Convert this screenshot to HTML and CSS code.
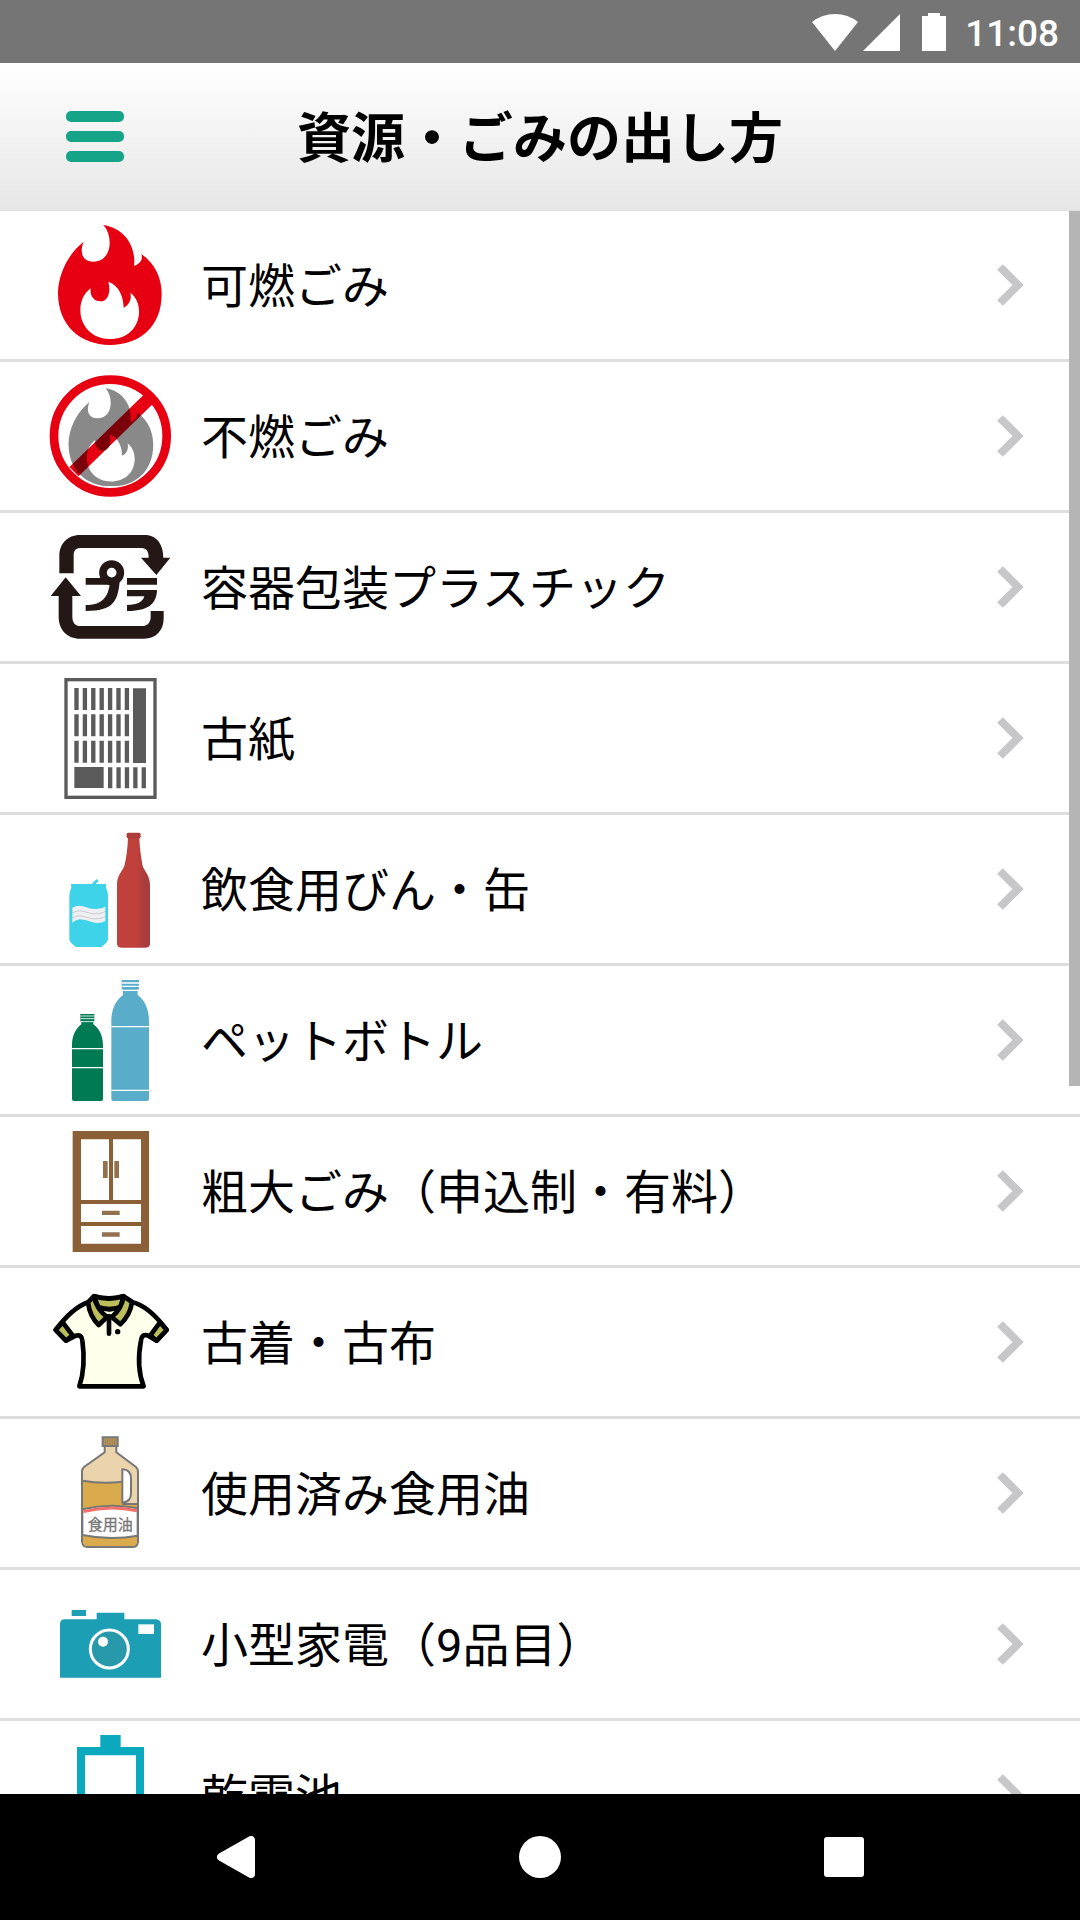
FILE: index.html
```html
<!DOCTYPE html>
<html lang="ja">
<head>
<meta charset="utf-8">
<meta name="viewport" content="width=device-width, initial-scale=1">
<title>資源・ごみの出し方</title>
<link rel="stylesheet" href="styles.css">
</head>
<body>
<svg class="defs" width="0" height="0" aria-hidden="true">
  <symbol id="flame" viewBox="0 0 360 360">
    <path fill-rule="evenodd" d="M160 0C222 9 259 62 252 123C269 118 280 104 274 87C315 115 335 160 335 205C336 305 270 360 180 360C90 360 24 300 24 205C24 148 55 86 101 50C88 80 96 110 130 110C164 110 179 82 179 53C179 32 172 13 160 0ZM175 170C183 200 175 229 151 229C130 229 119 210 122 190C102 205 91 228 91 255C91 305 128 342 180 342C230 342 265 310 267 263C268 240 260 217 241 203C245 220 240 240 221 248C220 215 208 182 175 170Z"/>
  </symbol>
  <symbol id="chevron" viewBox="0 0 30 50">
    <path d="M4 7L22 25L4 43" fill="none" stroke="#c7c7ca" stroke-width="8"/>
  </symbol>
</svg>
<div class="app">
  <div class="status">
    <svg class="status-signal" viewBox="0 0 134 38" aria-hidden="true">
      <path d="M0 9Q10 1 23 1T46 9L23 38ZM51 38L88 1V38ZM110 3H116V0H128V3H134V38H110Z"/>
    </svg>
    <time class="clock">11:08</time>
  </div>
  <header class="header">
    <button class="menu" type="button" aria-label="メニュー"><span></span><span></span><span></span></button>
    <h1 class="title">資源・ごみの出し方</h1>
  </header>
  <main class="content">
    <ul class="list">
      <li><a class="row" href="#burnable">
        <svg class="icon red" viewBox="0 0 360 360" aria-hidden="true"><use href="#flame"/></svg>
        <span class="label">可燃ごみ</span><svg class="chevron" aria-hidden="true"><use href="#chevron"/></svg></a></li>
      <li><a class="row" href="#nonburnable">
        <svg class="icon" viewBox="60 498 360 360" aria-hidden="true">
          <use href="#flame" x="96" y="535" width="294" height="294" fill="#898989"/>
          <circle cx="241" cy="678" r="169" fill="none" stroke="#e60012" stroke-width="26"/>
          <path class="slash" d="M354 569L132 785" stroke="#e60012" stroke-width="39"/>
        </svg>
        <span class="label">不燃ごみ</span><svg class="chevron" aria-hidden="true"><use href="#chevron"/></svg></a></li>
      <li><a class="row" href="#plastic">
        <svg class="icon" viewBox="60 51 360 360" fill="#231815" aria-hidden="true">
          <path d="M88 190V138C88 102 112 75 150 75H345C380 75 400 103 400 143H421L379 195L333 143H356C356 125 350 114 334 114H152C138 114 131 122 131 135V190Z"/>
          <path d="M107 202L153 258H127V320C127 338 136 348 152 348H335C352 348 362 338 362 320V303H401V325C401 362 378 386 342 386H150C112 386 86 360 86 320V258H62Z"/>
          <circle cx="245" cy="188" r="26" fill="none" stroke="#231815" stroke-width="23"/>
          <path d="M167 204H222L240 220V224H167ZM270 205C264 275 252 303 167 303V285C215 284 235 265 240 215ZM291 204H381V224H291ZM291 240H381C380 285 350 303 291 303V285C325 284 338 275 343 259H291Z"/>
        </svg>
        <span class="label">容器包装プラスチック</span><svg class="chevron" aria-hidden="true"><use href="#chevron"/></svg></a></li>
      <li><a class="row" href="#paper">
        <svg class="icon" viewBox="60 504 360 360" fill="#5a5a5a" stroke="#5a5a5a" aria-hidden="true">
          <rect x="108" y="509" width="267" height="353" fill="none" stroke-width="10"/>
          <path d="M133 567H298M133 646H298M133 725H298" stroke-width="66" stroke-dasharray="13 12.2"/>
          <path d="M234 803H348" stroke-width="63" stroke-dasharray="13 12.2"/>
          <path d="M309 535H348V759H309ZM133 771H221V834H133Z" stroke="none"/>
        </svg>
        <span class="label">古紙</span><svg class="chevron" aria-hidden="true"><use href="#chevron"/></svg></a></li>
      <li><a class="row" href="#bottles-cans">
        <svg class="icon" viewBox="60 57 360 360" aria-hidden="true">
          <linearGradient id="glass"><stop offset=".6" stop-color="#c0403c"/><stop offset=".85" stop-color="#a93c3d"/></linearGradient>
          <path fill="#3fd3ea" d="M123 222H185L200 207L206 212L197 222H228V233Q234 243 234 256V388Q234 397 214 411H138Q118 397 118 388V256Q118 243 124 234Z"/>
          <path fill="#eeeff2" d="M127 293Q145 282 166 291T205 296Q218 295 226 290V333Q207 343 186 336T148 328Q136 330 127 338Z"/>
          <path fill="none" stroke="#b5b9bf" stroke-width="2" d="M127 309Q145 298 166 306T205 311Q218 309 226 304M127 324Q145 313 166 321T205 326Q218 324 226 319"/>
          <path fill="url(#glass)" d="M294 82H328C329 120 335 150 338 168C345 187 360 197 360 225V401Q360 413 345 413H277Q261 413 261 401V225C261 197 275 187 283 168C289 145 293 115 294 82Z"/>
          <rect x="290" y="68" width="42" height="17" rx="5" fill="#ad3c3a"/>
        </svg>
        <span class="label">飲食用びん・缶</span><svg class="chevron" aria-hidden="true"><use href="#chevron"/></svg></a></li>
      <li><a class="row" href="#pet">
        <svg class="icon" viewBox="60 510 360 360" aria-hidden="true">
          <path fill="#007a53" d="M151 612H193V634H190V643C208 655 219 678 219 706V868Q219 873 213 873H132Q126 873 126 868V706C126 678 137 655 154 643V634H151Z"/>
          <path fill="#59adca" d="M275 510H327V538H323V555C345 570 357 600 357 632V868Q357 873 351 873H250Q244 873 244 868V632C244 600 257 570 279 555V538H275Z"/>
          <path stroke="#fff" stroke-width="4" d="M126 716H219M126 773H219M244 650H357M244 841H357M275 519H327M275 529H327M275 541H327"/>
          <path stroke="#d5eee5" stroke-width="3" d="M151 618H193M151 626H193M151 635H193"/>
        </svg>
        <span class="label">ペットボトル</span><svg class="chevron" aria-hidden="true"><use href="#chevron"/></svg></a></li>
      <li><a class="row" href="#bulky">
        <svg class="icon" viewBox="60 63 360 360" aria-hidden="true">
          <path fill="#8c6036" fill-rule="evenodd" d="M128 63H357V426H128ZM153 88V270H237V88ZM249 88V270H333V88ZM153 282V336H333V282ZM153 348V401H333V348Z"/>
          <path fill="#93704e" d="M219 153H233V204H219ZM253 153H267V204H253ZM216 302H269V315H216ZM216 367H269V380H216Z"/>
        </svg>
        <span class="label">粗大ごみ（申込制・有料）</span><svg class="chevron" aria-hidden="true"><use href="#chevron"/></svg></a></li>
      <li><a class="row" href="#clothes">
        <svg class="icon" viewBox="60 516 360 360" aria-hidden="true" stroke="#000" stroke-width="14" stroke-linejoin="round" stroke-linecap="round">
          <path fill="#ffffeb" d="M175 577C135 590 105 623 77 660L108 692L137 677Q155 672 157 691Q168 770 148 829H341Q318 770 333 691Q335 672 352 676L380 692L410 660C382 622 348 586 306 576L281 559Q237 571 192 559Z"/>
          <path fill="#bcbe5c" d="M77 660L98 637L128 676L108 692ZM410 660L390 637L361 676L380 692ZM192 559Q237 573 281 559L271 592Q237 602 205 592Z"/>
          <path fill="#bcbe5c" d="M174 577L192 559Q199 597 231 621L206 645Q179 620 174 577ZM306 576L281 559Q275 597 245 621L271 643Q301 615 306 576Z"/>
          <path fill="none" d="M209 593Q238 603 267 593M237 618V671"/>
          <circle cx="263" cy="665" r="8" fill="#000" stroke="none"/>
        </svg>
        <span class="label">古着・古布</span><svg class="chevron" aria-hidden="true"><use href="#chevron"/></svg></a></li>
      <li><a class="row" href="#oil">
        <svg class="icon" viewBox="60 69 360 360" aria-hidden="true" stroke="#777" stroke-width="6">
          <path fill="#ebd3ab" d="M224 108V127L162 171Q156 176 156 186V395Q158 411 172 411H308Q323 411 324 395V186Q324 176 318 171L259 127V108Z"/>
          <path fill="#daab4c" stroke="none" d="M159 214Q215 221 277 215V282H321V395Q320 408 308 408H172Q160 408 159 395Z"/>
          <path fill="none" d="M158 212Q215 222 277 215M277 282H324"/>
          <path fill="#fff" d="M277 178Q303 179 303 205V250Q303 276 277 278Z"/>
          <path fill="#fff" d="M157 298Q240 278 323 295V377Q240 392 157 375Z"/>
          <path fill="none" stroke="#f2716d" stroke-width="9" d="M160 305Q240 285 321 302"/>
          <path fill="#b8945b" d="M218 82H263V108H218Z"/>
          <path fill="none" stroke="#94764a" stroke-width="2" d="M226 87V104M233 87V104M240 87V104M247 87V104M254 87V104"/>
          <text class="oil-text" x="173" y="361" font-size="45">食用油</text>
        </svg>
        <span class="label">使用済み食用油</span><svg class="chevron" aria-hidden="true"><use href="#chevron"/></svg></a></li>
      <li><a class="row" href="#appliances">
        <svg class="icon" viewBox="60 522 360 360" aria-hidden="true">
          <path fill="#1c9fb4" d="M90 803V643Q90 628 104 628H200V608H283V628H378Q393 630 393 643V803ZM125 600H168V618H125Z"/>
          <path fill="#fff" d="M325 643H372V672H325Z"/>
          <circle cx="238" cy="717" r="57" fill="#2799aa" stroke="#fff" stroke-width="9"/>
          <circle cx="219" cy="695" r="15" fill="#fff"/>
        </svg>
        <span class="label">小型家電（9品目）</span><svg class="chevron" aria-hidden="true"><use href="#chevron"/></svg></a></li>
      <li><a class="row" href="#batteries">
        <svg class="icon" viewBox="60 105 360 360" aria-hidden="true">
          <path fill="#0aa9bd" fill-rule="evenodd" d="M211 105H272V141H342V465H141V141H211ZM165 166V441H318V166Z"/>
        </svg>
        <span class="label">乾電池</span><svg class="chevron" aria-hidden="true"><use href="#chevron"/></svg></a></li>
    </ul>
    <div class="thumb"></div>
  </main>
  <nav class="nav">
    <button type="button" aria-label="戻る"><svg viewBox="0 0 42 42"><path d="M6 21L36 4V38Z" stroke="#fff" stroke-width="8" stroke-linejoin="round"/></svg></button>
    <button type="button" aria-label="ホーム"><svg viewBox="0 0 42 42"><circle cx="21" cy="21" r="21"/></svg></button>
    <button type="button" aria-label="履歴"><svg viewBox="0 0 42 42"><rect x="1" y="1" width="40" height="40" rx="3"/></svg></button>
  </nav>
</div>
</body>
</html>
```
FILE: styles.css
```css
* {
  box-sizing: border-box;
}

body {
  margin: 0;
  background: #fff;
  color: #000;
  font-family: Roboto, "Noto Sans CJK JP", sans-serif;
}

.defs {
  position: absolute;
}

.app {
  display: flex;
  flex-direction: column;
  height: 100vh;
}

.status {
  display: flex;
  flex: none;
  justify-content: flex-end;
  align-items: center;
  gap: 19px;
  height: 63px;
  padding-right: 21px;
  background: #757575;
  color: #fff;
}

.status-signal {
  width: 134px;
  height: 38px;
  fill: #fff;
}

.clock {
  padding-top: 4px;
  font: 500 37px/44px Roboto, sans-serif;
}

.header {
  display: grid;
  flex: none;
  grid-template-columns: 60px 1fr 60px;
  align-items: center;
  height: 148px;
  padding: 0 65px;
  border-bottom: 1px solid #ddd;
  background: linear-gradient(#fff, #e6e6e6);
}

.menu {
  display: flex;
  flex-direction: column;
  gap: 9px;
  padding: 0 1px;
  border: 0;
  background: none;
}

.menu span {
  height: 11px;
  border-radius: 5px;
  background: #15a488;
}

.title {
  margin: 0;
  padding-top: 6px;
  font-size: 54px;
  font-weight: 700;
  line-height: 80px;
  text-align: center;
}

.content {
  position: relative;
  flex: 1;
  min-height: 0;
  overflow: hidden;
}

.list {
  margin: 0;
  padding: 0;
  list-style: none;
}

.row {
  display: flex;
  align-items: center;
  gap: 31px;
  height: 151px;
  padding: 0 54px 0 50px;
  border-bottom: 3px solid #dedede;
  color: #000;
  text-decoration: none;
}

.icon {
  flex: none;
  width: 120px;
  height: 120px;
  overflow: visible;
  isolation: isolate;
}

.red {
  fill: #e60012;
}

.slash {
  mix-blend-mode: multiply;
}

.oil-text {
  fill: #777;
  stroke-width: 1px;
}

.label {
  flex: 1;
  padding-top: 4px;
  font-size: 47px;
  line-height: 70px;
}

.chevron {
  flex: none;
  width: 30px;
  height: 50px;
}

.thumb {
  position: absolute;
  top: 0;
  right: 0;
  width: 11px;
  height: 55.3%;
  background: #b5b5b5;
}

.nav {
  display: grid;
  flex: none;
  grid-template-columns: repeat(3, 1fr);
  height: 126px;
  padding: 0 84px;
  background: #000;
}

.nav button {
  display: grid;
  place-items: center;
  padding: 0;
  border: 0;
  background: none;
}

.nav svg {
  width: 42px;
  height: 42px;
  fill: #fff;
}
```
